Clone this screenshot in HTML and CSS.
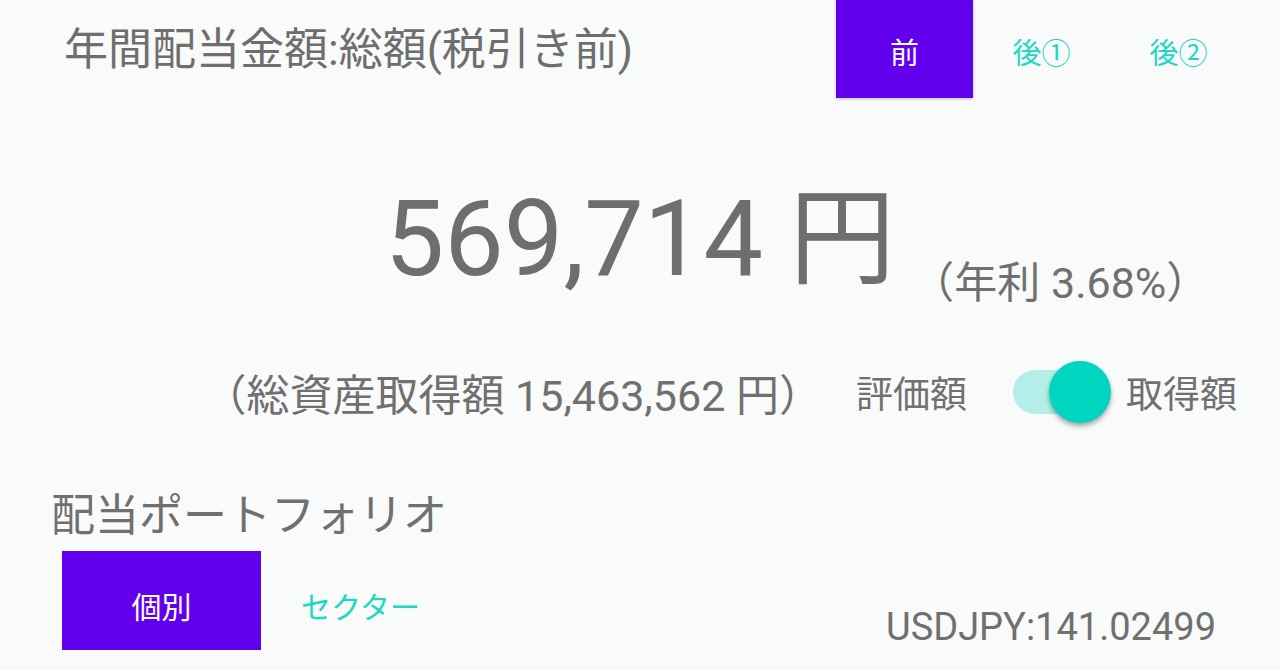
FILE: index.html
```html
<!DOCTYPE html>
<html lang="ja">
<head>
<meta charset="utf-8">
<title>年間配当金額</title>
<link rel="stylesheet" href="styles.css">
</head>
<body>
<div class="screen">
  <header class="header">
    <h1 class="title">年間配当金額:総額(税引き前)</h1>
    <nav class="tax-tabs">
      <button class="tab tab-active">前</button>
      <button class="tab">後①</button>
      <button class="tab">後②</button>
    </nav>
  </header>

  <section class="amount">
    <div class="amount-spacer"></div>
    <div class="amount-value">569,714 円</div>
    <div class="amount-rate">（年利 3.68%）</div>
  </section>

  <section class="summary">
    <div class="summary-total">（総資産取得額 15,463,562 円）</div>
    <div class="basis">
      <span class="basis-label">評価額</span>
      <span class="switch"><span class="switch-track"></span><span class="switch-thumb"></span></span>
      <span class="basis-label">取得額</span>
    </div>
  </section>

  <h2 class="section-title">配当ポートフォリオ</h2>

  <div class="portfolio-row">
    <nav class="portfolio-tabs">
      <button class="ptab ptab-active">個別</button>
      <button class="ptab">セクター</button>
    </nav>
    <div class="rate">USDJPY:141.02499</div>
  </div>
</div>
</body>
</html>
```
FILE: styles.css
```css
* { box-sizing: border-box; }
html, body { margin: 0; padding: 0; }
body {
  background: #f9fafa;
  color: #707070;
  font-family: Roboto, "Noto Sans CJK JP", sans-serif;
}
.screen {
  width: 1280px;
  height: 670px;
  overflow: hidden;
}
button {
  font-family: inherit;
  border: 0;
  background: transparent;
  padding: 0;
  cursor: pointer;
}

/* header */
.header {
  display: flex;
  justify-content: space-between;
  align-items: flex-start;
  height: 98px;
}
.title {
  margin: 0;
  padding-left: 64px;
  font-size: 44px;
  font-weight: 400;
  line-height: 100px;
  color: #6e6e6e;
}
.tax-tabs {
  display: flex;
  margin-right: 33px;
}
.tab {
  width: 137px;
  height: 98px;
  padding-top: 4px;
  font-size: 29px;
  color: #1ed8c2;
}
.tab-active {
  background: #6200ee;
  color: #ffffff;
  box-shadow: 0 1px 3px rgba(0,0,0,0.25);
}

/* big amount */
.amount {
  display: grid;
  grid-template-columns: 1fr auto 1fr;
  height: 255px;
  align-items: start;
}
.amount-value {
  font-size: 106px;
  line-height: 106px;
  margin-top: 88px;
  color: #6e6e6e;
  white-space: nowrap;
}
.amount-rate {
  font-size: 43px;
  line-height: 50px;
  margin-top: 160px;
  margin-left: 16px;
  white-space: nowrap;
}

/* summary row */
.summary {
  display: flex;
  justify-content: flex-end;
  align-items: center;
  height: 78px;
  padding-right: 43px;
  gap: 34px;
}
.summary-total {
  font-size: 43px;
  white-space: nowrap;
}
.basis {
  display: flex;
  align-items: center;
}
.basis-label {
  font-size: 37px;
}
.switch {
  position: relative;
  display: block;
  width: 97px;
  height: 62px;
  margin: 0 16px 0 46px;
}
.switch-track {
  position: absolute;
  left: 0;
  top: 9px;
  width: 89px;
  height: 44px;
  border-radius: 22px;
  background: #b3efe8;
}
.switch-thumb {
  position: absolute;
  left: 36px;
  top: 0;
  width: 62px;
  height: 62px;
  border-radius: 50%;
  background: #00d5bf;
  box-shadow: 0 3px 5px rgba(0,0,0,0.35);
}

/* section */
.section-title {
  margin: 50px 0 0;
  padding-left: 51px;
  font-size: 44px;
  font-weight: 400;
  line-height: 70px;
}

.portfolio-row {
  display: flex;
  justify-content: space-between;
  align-items: flex-end;
  padding-left: 62px;
  padding-right: 64px;
}
.portfolio-tabs {
  display: flex;
}
.ptab {
  width: 199px;
  height: 99px;
  padding-top: 8px;
  font-size: 30px;
  color: #1ed8c2;
}
.ptab-active {
  background: #6200ee;
  color: #ffffff;
}
.rate {
  font-size: 38px;
  line-height: 46px;
}
```
